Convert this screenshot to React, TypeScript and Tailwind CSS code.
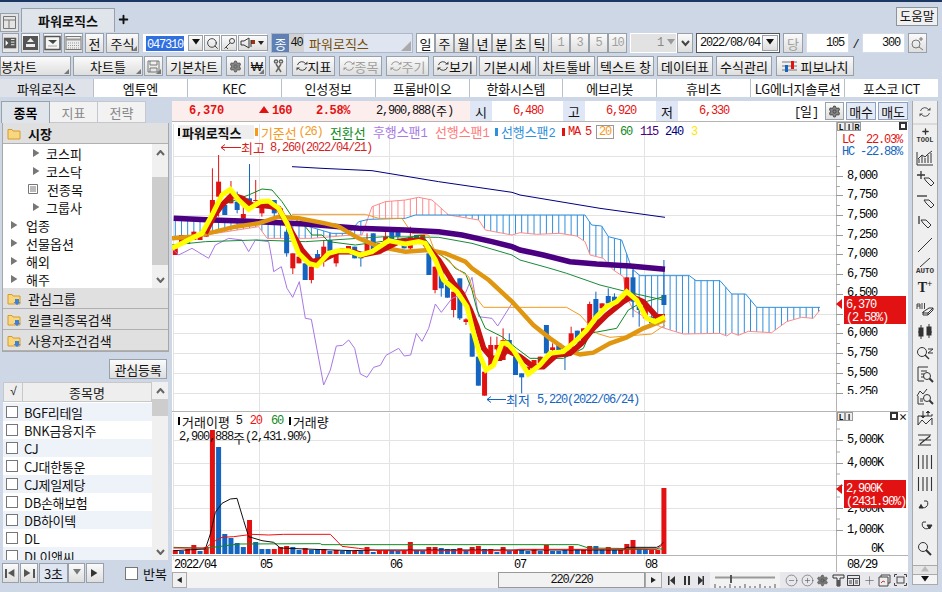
import type { ReactNode } from "react";
import { CirclePlus, CircleMinus, Plus, Search, Settings } from "lucide-react";

const RED = "#e31212";
const BLUE = "#1464c0";
const A: [number, number] = [172, 120];
const B: [number, number] = [172, 260];
const C: [number, number] = [500, 120];
const D: [number, number] = [500, 260];
const F: [number, number] = [500, 405];
const E: [number, number] = [172, 405];

type Seg = [[number, number], string];

// points were read off 3x crops of the chart, so each run keeps its crop origin
function pts(...segs: Seg[]) {
  const out: [number, number][] = [];
  for (const [[ox, oy], s] of segs) {
    for (const p of s.trim().split(/\s+/)) {
      const [x, y] = p.split(",").map(Number);
      const px = ox + x / 3;
      if (!out.length || px > out[out.length - 1][0]) out.push([px, oy + y / 3]);
    }
  }
  return out;
}
const toStr = (p: [number, number][]) => p.map((q) => q.join(",")).join(" ");
function yAt(p: [number, number][], x: number) {
  for (let i = 1; i < p.length; i++) {
    if (x <= p[i][0]) {
      const t = (x - p[i - 1][0]) / (p[i][0] - p[i - 1][0]);
      return p[i - 1][1] + t * (p[i][1] - p[i - 1][1]);
    }
  }
  return null;
}
const cx = (i: number) => 175.3 + 6.185 * i;

const yellow = pts(
  [A, "0,385 30,370 90,340 120,285 150,225 175,208 200,240 230,268 265,245 290,243 320,265 345,310 380,400 410,430 435,437 470,400 500,392 530,392 565,405 600,395 650,362 680,368 700,372 740,365 760,370"],
  [B, "790,0 815,60 855,95 885,140 905,220 925,290 942,330 965,315 990,250 1005,250"],
  [D, "15,250 40,270 85,342 120,315 150,280 190,275 225,245 260,210 290,170 320,140 350,125 380,95 410,120 440,175 465,185 495,170"],
);
const redMa = pts(
  [A, "100,340 125,290 150,255 180,225 210,235 240,255 290,258 320,265 350,320 390,390 420,425 460,415 500,395 545,395 570,405 620,395 680,365 750,360 770,385"],
  [B, "800,0 820,30 845,70 870,100 895,150 915,200 935,265 960,295 985,295"],
  [D, "0,290 20,270 60,290 100,320 130,320 170,285 210,280 245,250 280,205 320,165 370,125 395,110 430,125 470,170 495,170"],
);
const tan = pts(
  [A, "0,355 60,350 130,335 190,320 260,310 320,290 380,295 460,310 500,320 560,355 620,380 700,395 770,390 820,400 880,425"],
  [B, "900,25 950,60 1020,125"],
  [D, "50,140 100,195 150,235 200,270 240,283 280,278 330,250 380,232 430,205 495,180"],
);
const purple = pts(
  [A, "5,295 120,300 260,305 400,312 560,325 700,330 800,335 870,345 960,365 1020,380"],
  [C, "60,390 130,405 210,425 290,432 390,438 495,448"],
);
const navy = pts([A, "360,140 450,145 600,152 800,185 1020,217"], [C, "60,225 150,240 300,265 495,292"]);
const ma60 = pts(
  [A, "0,375 100,365 250,360 400,365 640,350 800,352 900,370 1020,405"],
  [C, "60,420 150,445"],
  [D, "65,0 200,40 300,75 400,100 490,120"],
);
const tenkan = pts(
  [A, "150,255 230,225 270,207 300,210 330,245 360,290 400,320 420,345 450,345 470,365 550,375 700,355 750,345 790,395"],
  [B, "830,0 850,25 880,40 900,90 915,150 940,205 990,230"],
  [D, "50,265 90,295 190,295 250,265 270,220 350,205 385,150 420,130 490,110"],
);
const kijun = pts(
  [A, "360,283 580,283 620,295 690,295 720,340 770,345 785,385"],
  [B, "860,30 890,50 910,110 935,142 1020,142"],
  [D, "200,142 240,165 290,220 330,232 455,222 480,205 495,195"],
);
const chikou = pts(
  [A, "0,385 20,405 60,385 110,415 130,375 170,355 210,360 230,395 250,360 290,365"],
  [B, "300,0 305,35 328,20 345,85 362,112 382,65 400,175 418,178 455,375 475,330 493,258 512,256 530,240 548,265 565,342 585,352 605,322 625,316 642,286 680,265 697,288 716,285 733,220 750,244 770,205 790,132 808,157 840,115 880,100 900,52 920,170 960,175 977,198 1020,130"],
);
const span1 = pts(
  [A, "0,355 100,345 260,320 285,355 420,355 540,345 570,345 600,260 640,245 700,240 740,232 780,240 830,285 920,300 940,330 1020,345"],
  [C, "60,338 110,343 180,340 230,348 255,365 270,405 310,415 340,450"],
  [D, "370,50 380,110 400,150 480,200 510,210 550,222 660,220 680,228 695,218 715,226 745,214 815,218 860,185 905,172 940,175 960,150"],
);
const span2 = pts(
  [A, "8,300 260,300 360,305 480,340 530,340 560,305 590,298 700,295 730,285 1020,285"],
  [C, "60,285 255,285 275,315 305,318 325,350 365,360 390,430 400,450"],
  [D, "380,20 400,35 420,47 568,47 588,62 660,62 695,102 737,102 770,142 960,142"],
);

// [index, r/b, body top, body bottom, wick top, wick bottom] in crop px
type Candle = [number, "r" | "b", number, number, number?, number?];
const candlesA: Candle[] = [
  [0, "r", 385, 405], [1, "r", 345, 375], [2, "b", 352, 372], [3, "r", 335, 360], [4, "r", 340, 360], [5, "r", 325, 350],
  [6, "r", 240, 300, 145, 300], [7, "r", 185, 230, 105, 290], [8, "b", 255, 285], [9, "r", 225, 250, 183, 250],
  [10, "b", 245, 270, 215, 280], [11, "r", 282, 296, 250, 300], [12, "b", 235, 245, 132, 250], [13, "r", 240, 243, 180, 245],
  [14, "r", 255, 280, 250, 290], [15, "r", 250, 265], [16, "b", 240, 280, 240, 290], [17, "r", 265, 280],
  [18, "b", 335, 400, 330, 410], [19, "r", 400, 445, 400, 462], [20, "r", 410, 430], [21, "b", 430, 480],
  [22, "r", 440, 480, 430, 490], [23, "b", 402, 430, 390, 440], [24, "r", 380, 425, 360, 440], [25, "b", 360, 400, 340, 410],
  [26, "r", 405, 430, 390, 440], [27, "r", 385, 400], [28, "r", 378, 395], [29, "b", 380, 415], [30, "b", 395, 415, 395, 440],
  [31, "r", 370, 400, 340, 405], [32, "b", 340, 390, 340, 395], [33, "r", 370, 400], [34, "r", 350, 380, 325, 385],
  [35, "b", 335, 360], [36, "b", 335, 350, 325, 360], [37, "b", 355, 385], [38, "r", 350, 385, 320, 390], [39, "b", 345, 360],
  [40, "r", 345, 360], [41, "b", 400, 465],
];
const candlesB: Candle[] = [
  [42, "r", 20, 90, 20, 100], [43, "b", 30, 85, 30, 110], [44, "b", 60, 113], [45, "r", 95, 150, 95, 172], [46, "b", 55, 175, 55, 180],
  [47, "r", 178, 186, 175, 195], [48, "b", 220, 290], [49, "b", 290, 377], [50, "r", 335, 407], [51, "r", 255, 325, 230, 325],
  [52, "r", 255, 268, 230, 290], [53, "r", 240, 300, 205, 300], [54, "b", 240, 275, 220, 280],
  [55, "b", 290, 345], [56, "b", 340, 352, 340, 400], [57, "r", 320, 330], [58, "r", 300, 330], [59, "r", 290, 310], [60, "b", 195, 280],
  [61, "r", 262, 270, 250, 275], [62, "b", 250, 275], [63, "b", 270, 290, 265, 330], [64, "r", 220, 265, 200, 265], [65, "b", 212, 250],
  [66, "r", 205, 250], [67, "r", 132, 200, 125, 200], [68, "b", 117, 185, 95, 185], [69, "r", 130, 145], [70, "b", 108, 130, 85, 135],
  [71, "b", 110, 130, 100, 135], [72, "b", 115, 135], [73, "r", 52, 115], [74, "b", 52, 125, 30, 172], [75, "b", 125, 150, 125, 200],
  [76, "r", 130, 175], [77, "b", 170, 190], [78, "r", 165, 175], [79, "b", 105, 135, 0, 135],
];

const volumes = [
  4, -3, 5, 9, -3, 7, 124, -107, -20, -16, -11, -7, 34, -12, -5, -5, 5, 7, 8, -7, -4, 6, -4, -5, 5, -3, 4, -3, -3, 3, -3, 7, -2, 4, 4, -4, -3, 4,
  12, -4, -3, 7, 7, -6, -5, -5, 6, -4, 7, 8, -5, 5, -2, 7, -3, 4, -4, -3, 5, -3, 9, -3, -3, -4, 8, -5, 4, 8, -8, -5, 7, -4, 4, 10, 14, -5, -5, 4, 4, 66,
];

const priceLabels: [string, number][] = [
  ["8,000", 175], ["7,750", 194], ["7,500", 214], ["7,250", 234], ["7,000", 253], ["6,750", 273], ["6,500", 292],
  ["6,000", 332], ["5,750", 352], ["5,500", 372], ["5,250", 391],
];
const priceGrid = [156, 176, 195, 215, 235, 254, 274, 294, 314, 333, 353, 373, 393];
const volGrid = [441, 464, 486, 509, 531];
const volLabels: [string, number][] = [["5,000K", 440], ["4,000K", 463], ["3,000K", 486], ["2,000K", 509], ["1,000K", 530], ["0K", 549]];
const vLines = [173.5, 259.5, 389.5, 513.5, 644.5];

const numCls = "font-['Liberation_Mono',monospace] text-[12px] tracking-[-1.2px]";

function N({ children, className = "" }: { children: ReactNode; className?: string }) {
  return <span className={`${numCls} ${className}`}>{children}</span>;
}

function Corner() {
  return <span className="absolute bottom-[1px] right-[1px] h-0 w-0 border-b-[5px] border-l-[5px] border-b-[#777] border-l-transparent" />;
}

function Btn({ children, className = "", corner, dim }: { children?: ReactNode; className?: string; corner?: boolean; dim?: boolean }) {
  return (
    <div
      className={`relative flex h-[20px] shrink-0 items-center justify-center border border-[#98a0aa] bg-gradient-to-b from-[#fbfbfb] to-[#dedede] ${dim ? "text-[#a0a0a0]" : "text-[#111]"} ${className}`}
    >
      {children}
      {corner && <Corner />}
    </div>
  );
}

function Tri({ dir = "right", color = "#777", size = 4 }: { dir?: "right" | "left" | "down" | "up"; color?: string; size?: number }) {
  const d = { right: "M0 0L8 5L0 10Z", left: "M8 0L0 5L8 10Z", down: "M0 0H10L5 7Z", up: "M5 0L10 7H0Z" }[dir];
  return (
    <svg width={size * 2} height={size * 2} viewBox="0 0 10 10" className="shrink-0">
      <path d={d} fill={color} />
    </svg>
  );
}

function Folder({ open }: { open?: boolean }) {
  return (
    <svg width="14" height="13" viewBox="0 0 14 13" className="shrink-0">
      <path d="M1 2.5H5L6 4H13V12H1Z" fill="#f9d77e" stroke="#d79a2a" />
      {open && <path d="M8 7H12V10H13.5L10 13L6.5 10H8Z" fill="#3c82d8" />}
    </svg>
  );
}

function Refresh({ color = "#555" }: { color?: string }) {
  return (
    <svg width="12" height="12" viewBox="0 0 12 12" fill="none" stroke={color} className="shrink-0">
      <path d="M1.5 5A4.5 4.5 0 0 1 9.8 4" />
      <path d="M10.5 7A4.5 4.5 0 0 1 2.2 8" />
      <path d="M8 4.5H11.5V1.5Z" fill={color} stroke="none" />
      <path d="M4 7.5H.5V10.5Z" fill={color} stroke="none" />
    </svg>
  );
}

function TopIcon({ children }: { children: ReactNode }) {
  return (
    <svg width="17" height="16" viewBox="0 0 17 16" fill="none" stroke="#444">
      {children}
    </svg>
  );
}

function Tool({ children }: { children: ReactNode }) {
  return (
    <div className="flex h-[21.75px] items-center justify-center">
      <svg width="20" height="20" viewBox="0 0 20 20" fill="none" stroke="#333">
        {children}
      </svg>
    </div>
  );
}

function Pencil({ x = 9, y = 9 }: { x?: number; y?: number }) {
  return <path d={`M${x} ${y}L${x + 5} ${y}L${x + 10} ${y + 5}L${x + 7} ${y + 8}L${x + 2} ${y + 3}Z`} />;
}

function TopBar() {
  return (
    <div className="flex h-[30px] shrink-0 items-end pl-0">
      <div className="flex h-[19px] w-[19px] items-center justify-center border border-[#98a0aa] bg-[#e4e4e4]">
        <svg width="13" height="13" viewBox="0 0 13 13" fill="none" stroke="#777">
          <path d="M.5.5H12.5V12.5H.5ZM.5 4H12.5M6 4V12.5" />
        </svg>
      </div>
      <div className="ml-[2px] flex h-[24px] w-[94px] items-center justify-center border border-b-0 border-[#98a0aa] bg-[#e0e5ec] text-[13px] font-bold">
        파워로직스
      </div>
      <Plus className="mb-[6px] ml-[2px]" size={13} strokeWidth={3.5} color="#111" />
      <div className="flex-1" />
      <div className="mb-[6px] mr-[4px] flex h-[19px] w-[42px] items-center justify-center border border-[#8e949c] bg-[#f0f0f0] text-[12.5px]">도움말</div>
    </div>
  );
}

function ToolbarOne() {
  return (
    <div className="mt-[1px] flex h-[20px] shrink-0 items-center">
      <Btn className="ml-[2px] w-[17px] !bg-none bg-[#e8e8e8]">
        <TopIcon>
          <rect x="1" y="2" width="14" height="12" fill="#555" stroke="none" />
          <path d="M9 4H13M9 7H13M9 10H13" stroke="#fff" />
          <path d="M3 5L6 8L3 11Z" fill="#fff" stroke="none" />
        </TopIcon>
      </Btn>
      <Btn className="ml-[2px] w-[19px]">
        <TopIcon>
          <rect x="1" y="1" width="15" height="14" fill="#555" stroke="none" />
          <path d="M5 7L8.5 3L12 7ZM4 9H13V12H4Z" fill="#eee" stroke="none" />
        </TopIcon>
      </Btn>
      <Btn className="ml-[3px] w-[19px]">
        <TopIcon>
          <rect x="1" y="1.5" width="15" height="13" fill="#f5f5f5" stroke="#555" strokeWidth="1.5" />
          <path d="M4 5H13L9 9Z" fill="#444" stroke="none" />
          <path d="M4 11H13" stroke="#aaa" />
        </TopIcon>
      </Btn>
      <Btn className="ml-[2px] w-[19px]">
        <TopIcon>
          <rect x="1" y="1.5" width="15" height="13" fill="#eee" stroke="#777" />
          <path d="M1 4.5H16" stroke="#999" strokeWidth="2" />
          <path d="M3 8H14M3 10.5H14M3 13H14" stroke="#999" strokeDasharray="1 1" />
        </TopIcon>
      </Btn>
      <Btn className="ml-[2px] w-[19px]">전</Btn>
      <Btn className="ml-[2px] w-[33px]" corner>주식</Btn>
      <div className="ml-[3px] flex h-[20px] w-[126px] shrink-0 items-center gap-[1px] border border-[#cfd6e0] bg-white pl-[3px]">
        <span className="mr-[3px] bg-[#2f6fe0] px-[1px]">
          <N className="text-white">047310</N>
        </span>
        <Btn className="!h-[16px] w-[15px]"><Tri dir="down" color="#111" /></Btn>
        <Btn className="!h-[16px] w-[16px]"><Search size={13} color="#222" strokeWidth={1.5} /></Btn>
        <Btn className="!h-[16px] w-[16px]">
          <svg width="13" height="13" viewBox="0 0 13 13" fill="none" stroke="#444"><circle cx="9" cy="4" r="2.5" /><path d="M7 6L1.5 11.5M3 10L5 12" /></svg>
        </Btn>
        <Btn className="!h-[16px] w-[30px]">
          <svg width="26" height="12" viewBox="0 0 26 12" fill="none" stroke="#333">
            <path d="M1 4H4L9 1V11L4 8H1Z" />
            <rect x="11" y="3" width="4" height="4" fill="#9a3412" stroke="none" />
            <path d="M11 3V10" />
            <path d="M18 4H24L21 8Z" fill="#222" stroke="none" />
          </svg>
        </Btn>
      </div>
      <div className="relative ml-[3px] flex h-[20px] w-[142px] shrink-0 items-center border border-[#aeb8c6] bg-[#dfe6f2]">
        <span className="flex h-[18px] w-[17px] items-center justify-center bg-[#5e80b4] text-white">종</span>
        <span className="flex h-[18px] w-[15px] items-center justify-center bg-[#d2d2d2]"><N>40</N></span>
        <span className="ml-[5px] text-[#7a4c00]">파워로직스</span>
        <span className="absolute bottom-[1px] right-[1px] h-0 w-0 border-b-[10px] border-l-[10px] border-b-[#aaa] border-l-transparent" />
      </div>
      <div className="ml-[3px] flex shrink-0">
        {["일", "주", "월", "년", "분", "초", "틱"].map((t, i) => (
          <Btn key={t} className={`w-[19px] ${i === 0 ? "!bg-none bg-white" : ""}`}>{t}</Btn>
        ))}
      </div>
      <div className="ml-[2px] flex shrink-0">
        {["1", "3", "5", "10"].map((t) => (
          <Btn key={t} className="w-[19px]" dim><N>{t}</N></Btn>
        ))}
      </div>
      <div className="ml-[3px] flex h-[20px] w-[47px] items-center justify-end border border-[#fff] bg-[#e2e2e2] pr-[1px] text-[#888]">
        <N>1</N>
        <span className="ml-[4px]"><Tri dir="down" color="#999" /></span>
      </div>
      <Btn className="w-[16px]">
        <svg width="9" height="7" viewBox="0 0 9 7" fill="none" stroke="#444" strokeWidth="2"><path d="M1 1L4.5 5L8 1" /></svg>
      </Btn>
      <div className="ml-[3px] flex h-[20px] w-[84px] items-center justify-between border border-[#555] bg-white pl-[3px] pr-[1px]">
        <N>2022/08/04</N>
        <Btn className="!h-[16px] w-[16px]"><Tri dir="down" color="#111" /></Btn>
      </div>
      <Btn className="ml-[3px] w-[20px]" dim>당</Btn>
      <div className="ml-[3px] flex h-[20px] w-[43px] items-center justify-end border border-[#d7dde6] bg-white pr-[4px]"><N>105</N></div>
      <div className="w-[13px] text-center"><N>/</N></div>
      <div className="flex h-[20px] w-[43px] items-center justify-end border border-[#d7dde6] bg-white pr-[4px]"><N>300</N></div>
      <Btn className="ml-[3px] w-[19px]">
        <svg width="15" height="15" viewBox="0 0 15 15" fill="none" stroke="#777"><circle cx="6" cy="8" r="4" /><path d="M9 11L13 14M11 1V5M9 3H13" /></svg>
      </Btn>
    </div>
  );
}

function ToolbarTwo() {
  const sync = (t: string, dim: boolean, cls: string) => (
    <Btn className={cls} dim={dim}>
      <Refresh color={dim ? "#999" : "#444"} />
      <span>{t}</span>
    </Btn>
  );
  return (
    <div className="mt-[3px] flex h-[20px] shrink-0 items-center">
      <Btn className="w-[71px] !justify-start" corner>봉차트</Btn>
      <Btn className="ml-[2px] w-[70px]" corner>차트틀</Btn>
      <Btn className="ml-[1px] w-[19px]" corner>
        <svg width="13" height="13" viewBox="0 0 13 13" fill="none" stroke="#777"><path d="M1 1H12V12H1ZM3 1V5H10V1M3 12V8H10V12" /></svg>
      </Btn>
      <Btn className="ml-[3px] w-[56px]">기본차트</Btn>
      <Btn className="ml-[4px] w-[19px]"><Settings size={13} color="#666" fill="#888" /></Btn>
      <Btn className="ml-[3px] w-[18px]" corner>
        <span className="font-['Liberation_Sans',sans-serif] text-[13px]">₩</span>
      </Btn>
      <Btn className="ml-[3px] w-[18px]">
        <svg width="11" height="14" viewBox="0 0 11 14" fill="none" stroke="#666" strokeWidth="1.5">
          <path d="M3 5L8 13M8 5L3 13" />
          <circle cx="3" cy="2.5" r="1.6" />
          <circle cx="8" cy="2.5" r="1.6" />
        </svg>
      </Btn>
      {sync("지표", false, "ml-[5px] w-[43px]")}
      {sync("종목", true, "ml-[4px] w-[43px]")}
      {sync("주기", true, "ml-[4px] w-[43px]")}
      {sync("보기", false, "ml-[4px] w-[44px]")}
      <Btn className="ml-[2px] w-[57px]">기본시세</Btn>
      <Btn className="ml-[2px] w-[57px]">차트툴바</Btn>
      <Btn className="ml-[2px] w-[57px]">텍스트 창</Btn>
      <Btn className="ml-[3px] w-[56px]">데이터표</Btn>
      <Btn className="ml-[3px] w-[56px]">수식관리</Btn>
      <Btn className="ml-[4px] w-[78px] gap-[4px]">
        <svg width="15" height="14" viewBox="0 0 15 14" fill="none">
          <path d="M0 3H15M0 7H15M0 11H15" stroke="#777" />
          <rect x="3" y="6" width="3" height="7" fill={BLUE} />
          <rect x="9" y="2" width="3" height="8" fill={RED} />
        </svg>
        피보나치
      </Btn>
    </div>
  );
}

function StockTabs() {
  const names = ["파워로직스", "엠투엔", "KEC", "인성정보", "프롬바이오", "한화시스템", "에브리봇", "휴비츠", "LG에너지솔루션", "포스코 ICT"];
  return (
    <div className="mt-[3px] grid h-[18px] w-[938px] shrink-0 grid-cols-10 gap-[1px] bg-[#b9c0ca]">
      {names.map((n, i) => (
        <div key={n} className={`flex items-center justify-center whitespace-nowrap tracking-[-0.2px] ${i === 0 ? "bg-[#dfe3e9]" : "bg-white"}`}>{n}</div>
      ))}
    </div>
  );
}

function TreeRow({ label, depth, icon }: { label: string; depth: 0 | 1; icon?: "doc" }) {
  return (
    <div className={`flex h-[18px] items-center ${depth === 1 ? "pl-[30px]" : "pl-[8px]"}`}>
      {icon === "doc" ? (
        <svg width="10" height="10" viewBox="0 0 10 10" fill="none" stroke="#777" className="-ml-[5px] mr-[4px]"><path d="M.5.5H9.5V9.5H.5ZM2 3H8M2 5H8M2 7H8" /></svg>
      ) : (
        <Tri dir="right" />
      )}
      <span className={depth === 1 ? "ml-[5px]" : "ml-[7px]"}>{label}</span>
    </div>
  );
}

function SectionHead({ label, open, bold }: { label: string; open?: boolean; bold?: boolean }) {
  return (
    <div className="flex h-[21px] shrink-0 items-center gap-[7px] border-b border-[#b0b0b0] bg-[#e0e0e0] pl-[4px]">
      <Folder open={open} />
      <span className={bold ? "font-bold" : ""}>{label}</span>
    </div>
  );
}

function ScrollBar({ className, thumb }: { className: string; thumb: string }) {
  return (
    <div className={`flex w-[16px] shrink-0 flex-col bg-[#f0f0f0] ${className}`}>
      <div className="flex h-[17px] items-center justify-center">
        <svg width="9" height="6" viewBox="0 0 9 6" fill="none" stroke="#666" strokeWidth="2"><path d="M1 5L4.5 1L8 5" /></svg>
      </div>
      <div className="flex-1"><div className={`bg-[#cdcdcd] ${thumb}`} /></div>
      <div className="flex h-[17px] items-center justify-center">
        <svg width="9" height="6" viewBox="0 0 9 6" fill="none" stroke="#666" strokeWidth="2"><path d="M1 1L4.5 5L8 1" /></svg>
      </div>
    </div>
  );
}

function LeftPanel() {
  const stocks = ["BGF리테일", "BNK금융지주", "CJ", "CJ대한통운", "CJ제일제당", "DB손해보험", "DB하이텍", "DL", "DL이앤씨"];
  return (
    <div className="flex w-[170px] shrink-0 flex-col">
      <div className="mt-[1px] flex h-[22px] pl-[1px] text-[#888]">
        <div className="flex w-[49px] items-center justify-center border border-b-0 border-[#98a0aa] bg-[#e0e5ec] font-bold text-black">종목</div>
        <div className="flex w-[48px] items-center justify-center border-y border-r border-[#c4c8ce] bg-[#f2f2f2]">지표</div>
        <div className="flex w-[48px] items-center justify-center border-y border-r border-[#c4c8ce] bg-[#f2f2f2]">전략</div>
      </div>
      <div className="ml-[2px] flex h-[229px] w-[167px] flex-col border-x border-b border-[#a8a8a8] bg-white">
        <SectionHead label="시장" bold />
        <div className="flex h-[144px] shrink-0 overflow-hidden">
          <div className="flex-1">
            <TreeRow label="코스피" depth={1} />
            <TreeRow label="코스닥" depth={1} />
            <TreeRow label="전종목" depth={1} icon="doc" />
            <TreeRow label="그룹사" depth={1} />
            <TreeRow label="업종" depth={0} />
            <TreeRow label="선물옵션" depth={0} />
            <TreeRow label="해외" depth={0} />
            <TreeRow label="해주" depth={0} />
          </div>
          <ScrollBar className="h-[144px]" thumb="mt-[16px] h-[88px]" />
        </div>
        <SectionHead label="관심그룹" open />
        <SectionHead label="원클릭종목검색" open />
        <SectionHead label="사용자조건검색" open />
      </div>
      <div className="mt-[7px] flex justify-end pr-[3px]">
        <Btn className="w-[58px] tracking-[-0.2px]">관심등록</Btn>
      </div>
      <div className="ml-[3px] mt-[3px] flex h-[178px] w-[165px] overflow-hidden bg-white">
        <div className="w-[149px]">
          <div className="flex h-[20px] border border-[#c8c8c8] bg-[#eeeeee] text-[#222]">
            <div className="flex w-[19px] items-center justify-center border-r border-[#c8c8c8]"><N>√</N></div>
            <div className="flex flex-1 items-center justify-center">종목명</div>
          </div>
          <div className="mt-[1px]">
            {stocks.map((s, i) => (
              <div key={s} className={`flex h-[18px] items-center ${i % 2 === 0 ? "bg-[#eef3fa]" : "bg-white"}`}>
                <span className="ml-[3px] h-[12px] w-[12px] border border-[#777] bg-white" />
                <span className="ml-[6px] tracking-[-0.3px]">{s}</span>
              </div>
            ))}
          </div>
        </div>
        <ScrollBar className="h-[178px]" thumb="h-[17px]" />
      </div>
      <div className="mt-[3px] flex h-[20px] items-center pl-[2px]">
        <Btn className="w-[17px] gap-[1px]"><span className="h-[9px] w-[2px] bg-[#555]" /><Tri dir="left" color="#555" /></Btn>
        <Btn className="ml-[1px] w-[18px] gap-[1px]"><Tri dir="right" color="#555" /><span className="h-[9px] w-[2px] bg-[#555]" /></Btn>
        <div className="ml-[1px] flex h-[20px] w-[29px] items-center justify-center border border-[#98a0aa] bg-[#dfe6f2]">3초</div>
        <Btn className="w-[17px]"><Tri dir="down" color="#777" /></Btn>
        <Btn className="ml-[1px] w-[18px]"><Tri dir="right" color="#333" /></Btn>
        <span className="ml-[21px] h-[13px] w-[13px] border border-[#777] bg-white" />
        <span className="ml-[5px]">반복</span>
      </div>
    </div>
  );
}

function InfoBar() {
  return (
    <div className="mt-[1px] flex h-[20px] shrink-0 items-center">
      <div className="flex h-full w-[298px] items-center bg-[#fdeeee]">
        <N className="ml-[17px] w-[46px] font-bold !tracking-[-0.2px] text-[#e31212]">6,370</N>
        <span className="ml-[24px] flex w-[57px] items-center gap-[3px] font-bold text-[#e31212]">
          <Tri dir="up" color="#e31212" size={5} />
          <N className="font-bold !tracking-[-0.6px]">160</N>
        </span>
        <N className="w-[60px] font-bold !tracking-[-0.4px] text-[#e31212]">2.58%</N>
        <span className="flex items-center whitespace-nowrap"><N>2,900,888(</N><span className="text-[12px]">주</span><N>)</N></span>
      </div>
      {[["시", "6,480"], ["고", "6,920"], ["저", "6,330"]].map(([l, v]) => (
        <div key={l} className="flex h-full w-[93px] items-center bg-white">
          <span className="flex h-full w-[22px] items-center justify-center bg-[#dfe6f5]">{l}</span>
          <N className="ml-[21px] text-[#e31212]">{v}</N>
        </div>
      ))}
      <div className="flex h-full flex-1 items-center justify-end gap-[2px] bg-white">
        <span className="mr-[5px]"><N>[</N><span>일</span><N>]</N></span>
        <Btn className="!h-[18px] w-[19px]"><Settings size={13} color="#555" fill="#888" /></Btn>
        <div className="flex h-[18px] w-[30px] items-center justify-center border border-[#8ea2bf] bg-[#e4ebf6] tracking-[-0.3px]">매수</div>
        <div className="flex h-[18px] w-[30px] items-center justify-center border border-[#8ea2bf] bg-[#e4ebf6] tracking-[-0.3px]">매도</div>
      </div>
    </div>
  );
}

function PaneBtns({ labels, right }: { labels: string[]; right: ReactNode }) {
  return (
    <div className="absolute right-[1px] top-[0px] flex w-[70px] justify-between">
      <div className="flex">
        {labels.map((l) => (
          <span key={l} className="flex h-[9px] w-[8px] items-center justify-center border border-[#999] bg-[#eee] text-[8px] font-bold">{l}</span>
        ))}
      </div>
      <div className="flex">{right}</div>
    </div>
  );
}

function MainPane() {
  const hatch: ReactNode[] = [];
  for (let i = 0; i < 106; i++) {
    const x = cx(i);
    const a = yAt(span1, x);
    const b = yAt(span2, x);
    if (a === null || b === null) continue;
    hatch.push(<line key={i} x1={x} x2={x} y1={a} y2={b} stroke={b < a ? "#2f8fdc" : "#ff8a8a"} />);
  }
  const candle = ([i, c, top, bot, wt, wb]: Candle, oy: number) => {
    const x = cx(i);
    const col = c === "r" ? RED : BLUE;
    return (
      <g key={i}>
        <line x1={x} x2={x} y1={oy + (wt ?? top) / 3} y2={oy + (wb ?? bot) / 3} stroke={col} />
        <rect x={x - 2.5} width={5} y={oy + top / 3} height={Math.max(1, (bot - top) / 3)} fill={col} />
      </g>
    );
  };
  return (
    <div className="relative h-[290px] shrink-0 bg-white">
      <svg width="736" height="290" viewBox="172 122 736 290" className="block">
        {priceGrid.map((y) => (
          <line key={y} x1={173} x2={836} y1={y + 0.5} y2={y + 0.5} stroke="#e3e3e3" />
        ))}
        {vLines.map((x) => (
          <line key={x} x1={x} x2={x} y1={124} y2={412} stroke="#e3e3e3" />
        ))}
        {hatch}
        <polyline points={toStr(span1)} fill="none" stroke="#ff8a8a" />
        <polyline points={toStr(span2)} fill="none" stroke="#2f8fdc" />
        {candlesA.map((c) => candle(c, 120))}
        {candlesB.map((c) => candle(c, 260))}
        <polyline points={toStr(chikou)} fill="none" stroke="#a878e4" />
        <polyline points={toStr(ma60)} fill="none" stroke="#1a8a3a" />
        <polyline points={toStr(tenkan)} fill="none" stroke="#0f8a1e" />
        <polyline points={toStr(kijun)} fill="none" stroke="#f59a1e" />
        <polyline points={toStr(navy)} fill="none" stroke="#000080" />
        <polyline points={toStr(purple)} fill="none" stroke="#4b0082" strokeWidth="5.5" />
        <polyline points={toStr(tan)} fill="none" stroke="#e0960f" strokeWidth="4.5" />
        <polyline points={toStr(redMa)} fill="none" stroke="#cc0f0f" strokeWidth="5.5" />
        <polyline points={toStr(yellow)} fill="none" stroke="#ffff00" strokeWidth="5" />

        <line x1={836.5} x2={836.5} y1={122} y2={412} stroke="#b4b4b4" />
        {priceGrid.map((y) => (
          <g key={y}>
            <line x1={836} x2={843} y1={y + 0.5} y2={y + 0.5} stroke="#999" />
            <line x1={836} x2={840} y1={y + 10.5} y2={y + 10.5} stroke="#aaa" />
          </g>
        ))}
        {priceLabels.map(([t, y]) => (
          <text key={t} x={877} y={y + 4} textAnchor="end" className={numCls}>{t}</text>
        ))}
        <rect x={837} y={394} width={71} height={17} fill="#fff" />
        <rect x={837} y={123} width={71} height={34} fill="#fff" />
        <text x={842} y={143} fill={RED} className={numCls} xmlSpace="preserve">LC  22.03%</text>
        <text x={842} y={155} fill={BLUE} className={numCls} xmlSpace="preserve">HC -22.88%</text>
        <path d="M842 304L836 309V299Z" transform="rotate(180 839 304)" fill={RED} />
        <rect x={844} y={296} width={62} height={28} fill={RED} />
        <text x={846} y={308} fill="#fff" className={numCls}>6,370</text>
        <text x={846} y={321} fill="#fff" className={numCls}>(2.58%)</text>
        <line x1={172} x2={908} y1={411.5} y2={411.5} stroke="#b4b4b4" />
      </svg>
      <PaneBtns
        labels={["L", "I", "R"]}
        right={<span className="h-[8px] w-[8px] border-2 border-[#333] bg-white" />}
      />
      <div className="absolute left-[6px] top-[3px] flex h-[14px] items-center whitespace-nowrap tracking-[-0.1px]">
        <span className="flex h-[14px] w-[76px] items-center bg-[#eeeeee] font-bold">
          <span className="mr-[2px] h-[8px] w-[2px] bg-black" />
          파워로직스
        </span>
        <span className="ml-[1px] h-[8px] w-[3px] bg-[#f59a1e]" />
        <span className="ml-[3px] flex w-[69px] items-center text-[#f59a1e]">기준선<N className="ml-[2px]">(26)</N></span>
        <span className="w-[43px] text-[#0f8a1e]">전환선</span>
        <span className="w-[62px] text-[#a878e4]">후행스팬<N>1</N></span>
        <span className="w-[60px] text-[#ff7a7a]">선행스팬<N>1</N></span>
        <span className="h-[8px] w-[3px] bg-[#2f8fdc]" />
        <span className="ml-[3px] w-[61px] text-[#2f8fdc]">선행스팬<N>2</N></span>
        <span className="h-[8px] w-[3px] bg-[#e31212]" />
        <N className="ml-[3px] w-[17px] text-[#e31212]">MA</N>
        <N className="w-[11px] text-[#e31212]">5</N>
        <span className="flex h-[14px] w-[18px] items-center justify-center border border-[#999]"><N className="text-[#f59a1e]">20</N></span>
        <N className="ml-[6px] w-[20px] text-[#0f8a1e]">60</N>
        <N className="w-[25px] text-[#4b0082]">115</N>
        <N className="w-[26px] text-[#000080]">240</N>
        <N className="text-[#ffe600]">3</N>
      </div>
      <div className="absolute left-[48px] top-[19px] flex items-center whitespace-nowrap text-[#d81f1f]">
        <svg width="21" height="7" viewBox="0 0 21 7" fill="none" stroke="currentColor"><path d="M21 3.5H1M5 .5L1 3.5L5 6.5" /></svg>
        <span>최고</span>
        <N className="ml-[5px]">8,260(2022/04/21)</N>
      </div>
      <div className="absolute left-[314px] top-[271px] flex items-center whitespace-nowrap text-[#1464c0]">
        <svg width="20" height="7" viewBox="0 0 20 7" fill="none" stroke="currentColor"><path d="M20 3.5H1M5 .5L1 3.5L5 6.5" /></svg>
        <span>최저</span>
        <N className="ml-[7px]">5,220(2022/06/24)</N>
      </div>
    </div>
  );
}

function VolumePane() {
  const black = pts([E, "5,440 100,435 115,390 130,325 150,298 175,285 195,283 215,350 230,398 270,410 305,415 325,432 400,435 540,440 610,438 1020,438"], [F, "60,438 370,438 380,430 470,430 480,425 490,415"]);
  const red = pts([E, "5,432 100,432 130,410 150,400 185,398 240,391 290,393 335,391 475,391 510,427 560,433 620,440 1020,440"], [F, "60,436 470,436 490,420"]);
  const green = pts([E, "5,430 100,433 200,420 445,419 450,422 1020,422"], [F, "60,422 235,422 265,432 490,435"]);
  return (
    <div className="relative h-[160px] shrink-0 bg-white">
      <svg width="736" height="160" viewBox="172 413 736 160" className="block">
        {volGrid.map((y) => (
          <line key={y} x1={173} x2={836} y1={y + 0.5} y2={y + 0.5} stroke="#e3e3e3" />
        ))}
        {vLines.map((x) => (
          <line key={x} x1={x} x2={x} y1={414} y2={561} stroke="#e3e3e3" />
        ))}
        {volumes.map((v, i) => (
          <rect key={i} x={cx(i) - 2.5} width={5} y={555 - Math.abs(v)} height={Math.abs(v)} fill={v > 0 ? RED : BLUE} />
        ))}
        <polyline points={toStr(green)} fill="none" stroke="#0f8a1e" />
        <polyline points={toStr(black)} fill="none" stroke="#111" />
        <polyline points={toStr(red)} fill="none" stroke="#f01010" />
        <line x1={172} x2={908} y1={556.5} y2={556.5} stroke="#b4b4b4" />
        <line x1={836.5} x2={836.5} y1={413} y2={573} stroke="#b4b4b4" />
        {volGrid.map((y) => (
          <g key={y}>
            <line x1={836} x2={843} y1={y + 0.5} y2={y + 0.5} stroke="#999" />
            <line x1={836} x2={840} y1={y - 11} y2={y - 11} stroke="#aaa" />
          </g>
        ))}
        {volLabels.map(([t, y]) => (
          <text key={t} x={883} y={y + 4} textAnchor="end" className={numCls}>{t}</text>
        ))}
        <path d="M842 490L836 495V485Z" transform="rotate(180 839 490)" fill={RED} />
        <rect x={844} y={481} width={62} height={28} fill={RED} />
        <text x={846} y={493} fill="#fff" className={numCls}>2,900K</text>
        <text x={846} y={506} fill="#fff" className={numCls}>(2431.90%)</text>
        {([["2022/04", 174], ["05", 260], ["06", 390], ["07", 514], ["08", 645], ["08/29", 847]] as [string, number][]).map(([t, x]) => (
          <text key={t} x={x} y={569} className={numCls}>{t}</text>
        ))}
      </svg>
      <PaneBtns
        labels={["L", "I"]}
        right={
          <>
            <span className="h-[8px] w-[8px] border-2 border-[#333] bg-white" />
            <span className="ml-[1px] flex h-[8px] w-[8px] items-center justify-center text-[9px] font-bold">×</span>
          </>
        }
      />
      <div className="absolute left-[6px] top-[2px] flex h-[14px] items-center whitespace-nowrap">
        <span className="mr-[2px] h-[8px] w-[2px] bg-black" />
        <span>거래이평</span>
        <N className="ml-[6px]">5</N>
        <N className="ml-[8px] text-[#f01010]">20</N>
        <N className="ml-[9px] text-[#0f8a1e]">60</N>
        <span className="ml-[6px] mr-[2px] h-[8px] w-[2px] bg-black" />
        <span>거래량</span>
      </div>
      <div className="absolute left-[7px] top-[18px] flex h-[14px] items-center whitespace-nowrap">
        <N>2,900,888</N>
        <span>주</span>
        <N>(2,431.90%)</N>
      </div>
    </div>
  );
}

function Transport() {
  return (
    <div className="flex h-[16px] shrink-0 items-stretch bg-[#e8e8ec]">
      <div className="flex w-[15px] items-center justify-center border border-[#aaa] bg-[#f0f0f0]"><Tri dir="left" color="#222" size={3} /></div>
      <div className="w-[311px] bg-[#f3f3f3]" />
      <div className="flex w-[147px] items-center justify-center border border-[#999] bg-[#f2f2f2]"><N>220/220</N></div>
      <div className="flex w-[17px] items-center justify-center border border-[#aaa] bg-[#f0f0f0]"><Tri dir="right" color="#222" size={3} /></div>
      <div className="flex w-[48px] items-center justify-center gap-[5px]">
        <svg width="36" height="9" viewBox="0 0 36 9" fill="#333">
          <path d="M0 0H1.5V9H0ZM7 0V9L2 4.5Z" />
          <path d="M16 0H18V9H16ZM20 0H22V9H20Z" />
          <path d="M30 0V9L35 4.5ZM34.5 0H36V9H34.5Z" />
        </svg>
      </div>
      <div className="w-[70px] bg-[#f2f2f2] pt-[2px]">
        <svg width="70" height="14" viewBox="0 0 70 14" fill="none" stroke="#555">
          <path d="M5 3.5H65" stroke="#999" strokeWidth="2" />
          <path d="M21 1V9" strokeWidth="2" />
          <path d="M5 14V10M10 14V12M15 14V12M20 14V10M25 14V12M30 14V12M35 14V10M40 14V12M45 14V12M50 14V10M55 14V12M60 14V12M65 14V10" />
        </svg>
      </div>
      <div className="flex flex-1 items-center justify-between pl-[5px] pr-[1px] text-[#444]">
        <CircleMinus size={13} strokeWidth={1} />
        <CirclePlus size={13} strokeWidth={1} />
        <Settings size={13} strokeWidth={1} fill="#777" />
        <svg width="13" height="13" viewBox="0 0 13 13" fill="#555"><path d="M1 1H12V4H8V12H5V4H1Z" stroke="#333" fill="none" /><rect x="5" y="6" width="3" height="6" /></svg>
        <svg width="13" height="11" viewBox="0 0 13 11" fill="none" stroke="#444"><path d="M.5.5H12.5V10.5H.5ZM.5 3.5H12.5M6.5 3.5V10.5M2 6H5M8 6H11M2 8H5M8 8H11" /></svg>
        <Plus size={13} strokeWidth={1} />
        <svg width="13" height="13" viewBox="0 0 13 13" fill="none" stroke="#444"><path d="M3 3V1H12V9H10" /><path d="M1 3H10V12H1Z" fill="#eee" /><path d="M3 9L5 7L7 8" stroke="#c33" /></svg>
        <svg width="13" height="12" viewBox="0 0 13 12" fill="none" stroke="#444"><path d="M.5 3V.5H3M10 .5H12.5V3M12.5 9V11.5H10M3 11.5H.5V9" /><rect x="3" y="3" width="7" height="6" /></svg>
      </div>
    </div>
  );
}

function RightTools() {
  return (
    <div className="ml-[4px] mt-[1px] flex h-[484px] w-[26px] shrink-0 flex-col border-x border-[#aaa] bg-[#efefef]">
      <div className="flex h-[22px] items-center justify-center"><Refresh /></div>
      <div className="h-[2px] bg-[#dadada]" />
      <div className="flex h-[21.75px] flex-col items-center justify-center">
        <Plus size={9} strokeWidth={3.5} color="#333" />
        <span className="font-['Liberation_Mono',monospace] text-[7px] font-bold leading-[8px] text-[#333]">TOOL</span>
      </div>
      <Tool><path d="M2 4V17H18M4 15V11M7 15V8M10 15V10M13 15V7M16 15V5" /><path d="M3 11L7 7L10 9L13 6L17 3" /></Tool>
      <Tool><path d="M2 6H10M6 2V10" strokeWidth="1.3" /><Pencil /></Tool>
      <Tool><path d="M2 5H12" strokeWidth="1.3" /><Pencil /></Tool>
      <Tool><path d="M4 3V11" strokeWidth="1.3" /><Pencil x={6} y={7} /></Tool>
      <Tool><path d="M3 17L17 3" /></Tool>
      <div className="flex h-[21.75px] flex-col items-center justify-center">
        <svg width="16" height="9" viewBox="0 0 16 9" fill="none" stroke="#333"><path d="M3 9L13 0" /></svg>
        <span className="font-['Liberation_Mono',monospace] text-[7.5px] font-bold leading-[8px] text-[#333]">AUTO</span>
      </div>
      <div className="flex h-[21.75px] items-center justify-center font-['Liberation_Serif',serif] text-[14px] font-bold text-[#222]">T<span className="-mt-[6px] font-['Liberation_Mono',monospace] text-[9px] font-normal">+</span></div>
      <Tool><path d="M8 12L14 8H18L13 13H8Z" /><path d="M8 12V15H13L18 10V8M13 13V15" /><path d="M2 9V4H5V9M2 6H5M7 3V9M9.5 3V9" strokeWidth=".9" /></Tool>
      <Tool><path d="M3 10H6M14 10H17" /><path d="M6 3V17" /><rect x="4" y="6" width="4" height="8" fill="#333" /><rect x="12" y="5" width="4" height="8" fill="#333" /><path d="M14 2V16" /></Tool>
      <Tool><circle cx="7" cy="9" r="4.5" /><path d="M10 12L14 16" strokeWidth="1.5" /><path d="M13 6H18L13 10H18" /></Tool>
      <Tool><path d="M3 2H13M3 2V16H9M6 6H12M6 9H9M6 12H9" /><circle cx="12" cy="11" r="3.5" /><path d="M14.5 13.5L18 17" strokeWidth="2" /></Tool>
      <Tool><path d="M2 9L5 4L8 7L12 2M3 17H9M3 9V17M5 12H8M5 14H8" /><circle cx="12" cy="11" r="3.5" /><path d="M14.5 13.5L18 17" strokeWidth="2" /></Tool>
      <Tool><path d="M3 7V16L7 11L11 15L17 9V16M3 7H17V5" /><path d="M8 2V9M6 7L8 9L10 7M13 2V7M11 4L13 2L15 4" fill="#333" /></Tool>
      <Tool><path d="M3 5H16M3 15H16M4 10H16M15 6L5 14" strokeWidth="1.2" /></Tool>
      <Tool><path d="M3.5 3V17M8 3V17M12 3V17M16.5 3V17" strokeWidth="1.1" /></Tool>
      <Tool><path d="M3.5 3V17M8 3V17M12 3V17M16.5 3V17" strokeWidth="1.1" /></Tool>
      <Tool><path d="M9 5H12A4 4 0 1 1 5 10" /><path d="M4 8H8L6 11.5Z" transform="rotate(180 6 10)" fill="#333" /></Tool>
      <Tool><path d="M11 5H8A4 4 0 1 0 15 10" /><path d="M12 8H17L14.5 12Z" fill="#333" /></Tool>
      <Tool><circle cx="8" cy="8" r="4.5" /><path d="M11 11L16 16" strokeWidth="2" /></Tool>
      <div className="flex-1" />
      <div className="flex h-[10px] items-center justify-center border-y border-[#aaa] bg-[#e6e6e6]"><Tri dir="up" color="#bbb" /></div>
      <div className="flex h-[10px] items-center justify-center border-b border-[#aaa] bg-[#f4f4f4]"><Tri dir="down" color="#111" /></div>
    </div>
  );
}

export default function App() {
  return (
    <div className="flex h-[592px] w-[942px] flex-col overflow-hidden bg-[#cdd7e5] font-['Noto_Sans_CJK_KR',sans-serif] text-[13px] leading-none text-[#111]">
      <div className="h-[2px] shrink-0 bg-[#1d3763]" />
      <TopBar />
      <ToolbarOne />
      <ToolbarTwo />
      <StockTabs />
      <div className="mt-[3px] flex flex-1">
        <LeftPanel />
        <div className="ml-[2px] flex w-[736px] shrink-0 flex-col">
          <InfoBar />
          <div className="h-[1px] shrink-0 bg-[#b4b4b4]" />
          <MainPane />
          <VolumePane />
          <Transport />
        </div>
        <RightTools />
      </div>
    </div>
  );
}
